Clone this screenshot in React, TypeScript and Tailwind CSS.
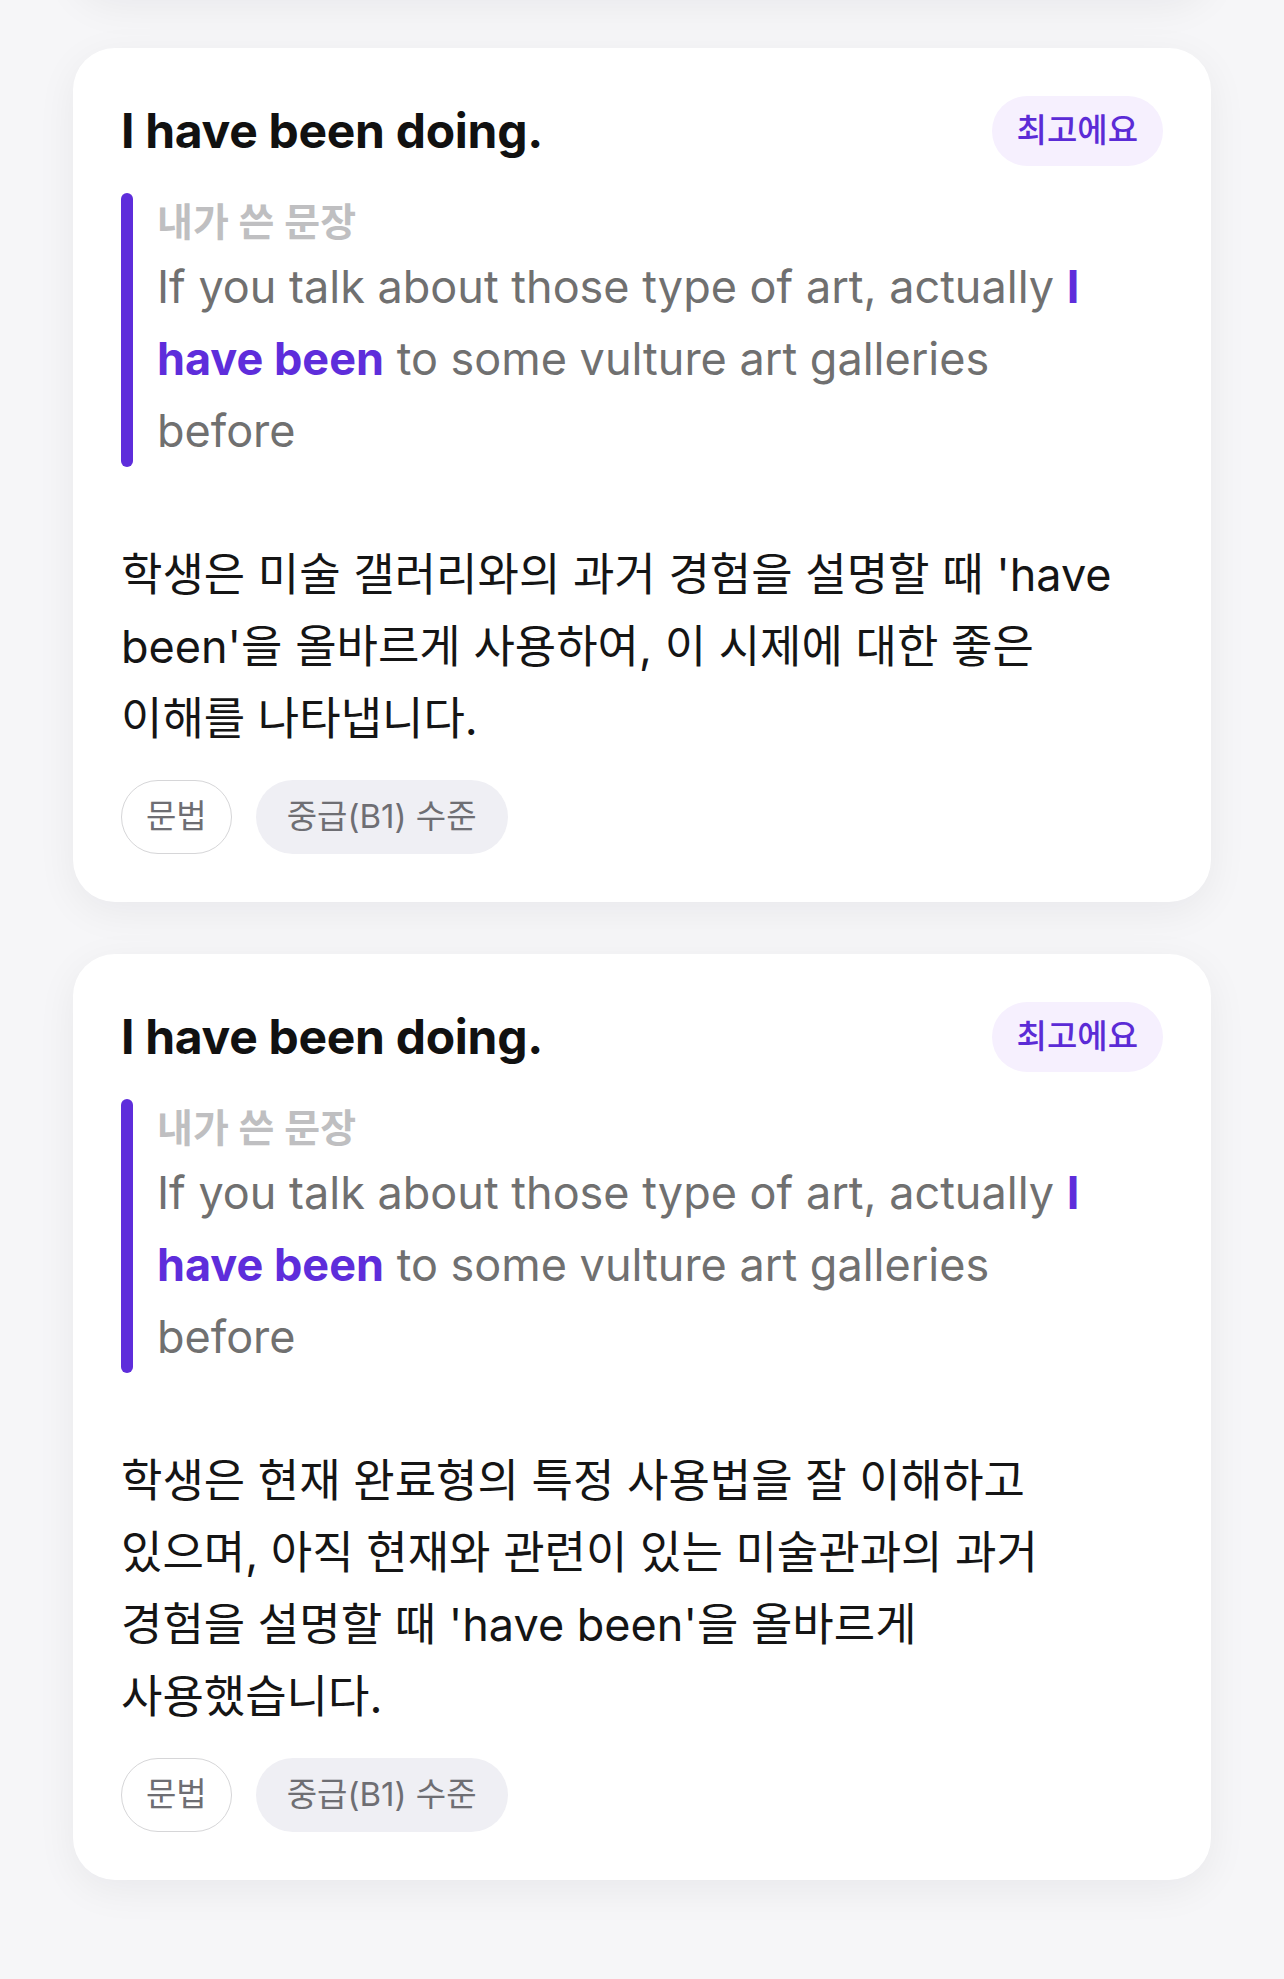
import React from "react";

type Feedback = {
  title: string;
  before: string;
  highlight: string;
  after: string;
  comment: string;
};

const items: Feedback[] = [
  {
    title: "I have been doing.",
    before: "If you talk about those type of art, actually ",
    highlight: "I have been",
    after: " to some vulture art galleries before",
    comment:
      "학생은 미술 갤러리와의 과거 경험을 설명할 때 'have been'을 올바르게 사용하여, 이 시제에 대한 좋은 이해를 나타냅니다.",
  },
  {
    title: "I have been doing.",
    before: "If you talk about those type of art, actually ",
    highlight: "I have been",
    after: " to some vulture art galleries before",
    comment:
      "학생은 현재 완료형의 특정 사용법을 잘 이해하고 있으며, 아직 현재와 관련이 있는 미술관과의 과거 경험을 설명할 때 'have been'을 올바르게 사용했습니다.",
  },
];

function FeedbackCard({ item }: { item: Feedback }) {
  return (
    <div className="rounded-[42px] bg-white px-[48px] pt-[48px] pb-[48px] shadow-[0_10px_40px_rgba(20,20,40,0.06)]">
      {/* Header */}
      <div className="flex h-[70px] items-center justify-between">
        <h2 className="text-[48px] font-bold leading-none tracking-[-0.3px] text-[#111111]">
          {item.title}
        </h2>
        <span className="flex h-[70px] items-center rounded-full bg-[#f6f0fe] px-[25px] text-[33px] font-medium text-[#5b2bd6]">
          최고에요
        </span>
      </div>

      {/* Quoted sentence */}
      <div className="mt-[27px] flex gap-[24px]">
        <div className="w-[12px] shrink-0 rounded-full bg-[#5e2ddb]" />
        <div className="max-w-[955px]">
          <p className="text-[39px] font-semibold leading-[58px] text-[#bfbfc1]">
            내가 쓴 문장
          </p>
          <p className="text-[45px] leading-[72px] text-[#707070]">
            {item.before}
            <span className="font-bold text-[#5e2ddb]">{item.highlight}</span>
            {item.after}
          </p>
        </div>
      </div>

      {/* Comment */}
      <p className="mt-[72px] max-w-[1020px] break-keep text-[45px] leading-[72px] text-[#151515]">
        {item.comment}
      </p>

      {/* Tags */}
      <div className="mt-[25px] flex gap-[24px]">
        <span className="flex h-[74px] items-center rounded-full border-[1.5px] border-[#d6d6d8] px-[24px] text-[33px] text-[#6e6e73]">
          문법
        </span>
        <span className="flex h-[74px] items-center rounded-full bg-[#efeff4] px-[31px] text-[33px] text-[#6e6e73]">
          중급(B1) 수준
        </span>
      </div>
    </div>
  );
}

export default function App() {
  return (
    <div
      className="min-h-[1979px] overflow-hidden bg-[#f6f6f8]"
      style={{ fontFamily: "Inter, 'Noto Sans CJK KR', sans-serif" }}
    >
      <div className="flex flex-col gap-[52px] px-[73px]">
        {/* tail of the previous card */}
        <div className="-mt-[300px] h-[296px] rounded-[42px] bg-white shadow-[0_10px_40px_rgba(20,20,40,0.06)]" />
        {items.map((item, i) => (
          <FeedbackCard key={i} item={item} />
        ))}
      </div>
    </div>
  );
}
